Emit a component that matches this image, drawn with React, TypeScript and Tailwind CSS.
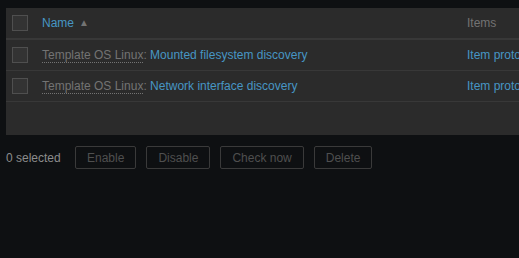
import React from 'react';

const rows = [
    { host: 'Template OS Linux', name: 'Mounted filesystem discovery' },
    { host: 'Template OS Linux', name: 'Network interface discovery' },
];

function Checkbox() {
    return <span className="block w-4 h-4 border border-[#4f4f4f] bg-[#333333]" />;
}

export default function App() {
    return (
        <div className="w-full h-screen overflow-hidden bg-[#0e1012] text-[12px] font-['Liberation_Sans',Arial,sans-serif]">
            <div className="pt-2 pl-1.5">
                {/* list table */}
                <div className="w-[560px] bg-[#2b2b2b]">
                    <div className="grid grid-cols-[36px_425px_1fr] items-center h-[32px] border-b-2 border-[#383838]">
                        <div className="pl-1.5"><Checkbox /></div>
                        <div className="flex items-center gap-[5px] text-[#4796c4]">
                            <span>Name</span>
                            <span className="text-[#737373] text-[10px] leading-none">▲</span>
                        </div>
                        <div className="text-[#737373]">Items</div>
                    </div>

                    {rows.map((r) => (
                        <div key={r.name} className="grid grid-cols-[36px_425px_1fr] items-center h-[31px] border-b border-[#383838]">
                            <div className="pl-1.5"><Checkbox /></div>
                            <div className="whitespace-nowrap">
                                <span className="text-[#737373] border-b border-dotted border-[#737373]">{r.host}</span>
                                <span className="text-[#737373]">: </span>
                                <span className="text-[#4796c4]">{r.name}</span>
                            </div>
                            <div className="text-[#4796c4] whitespace-nowrap">Item prototypes</div>
                        </div>
                    ))}

                    <div className="h-[33px]" />
                </div>
            </div>

            {/* action bar */}
            <div className="flex items-center mt-[11px] pl-1.5">
                <span className="text-[#8c8c8c] mr-[14px] w-[55px]">0 selected</span>
                <div className="flex gap-[10px]">
                    {['Enable', 'Disable', 'Check now', 'Delete'].map((b) => (
                        <button
                            key={b}
                            disabled
                            className="h-[23px] px-[11px] border border-[#3a3a3a] rounded-[2px] text-[#4f4f4f] bg-transparent"
                        >
                            {b}
                        </button>
                    ))}
                </div>
            </div>
        </div>
    );
}
